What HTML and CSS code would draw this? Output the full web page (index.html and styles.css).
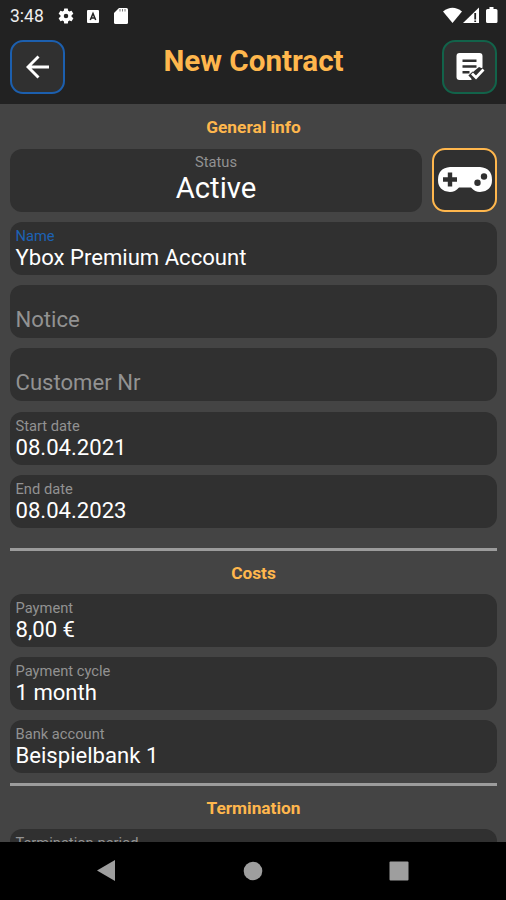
FILE: index.html
```html
<!DOCTYPE html>
<html lang="en">
<head>
<meta charset="utf-8">
<title>New Contract</title>
<link rel="stylesheet" href="styles.css">
</head>
<body>
<div class="phone">
  <header class="top">
    <div class="statusbar">
      <span class="clock">3:48</span>
      <svg class="gear" width="18" height="18" viewBox="0 0 24 24"><path fill="#fff" fill-rule="evenodd" d="M19.4 13a7.500 7.500 0 0 0 0-2l2.100-1.650a.5.5 0 0 0 .12-.64l-2-3.460a.5.5 0 0 0-.6-.22l-2.500 1a7.300 7.300 0 0 0-1.700-.98l-.38-2.650A.5.5 0 0 0 14 2h-4a.5.5 0 0 0-.5.420l-.38 2.650c-.6.250-1.170.590-1.690.980l-2.490-1a.5.5 0 0 0-.61.220l-2 3.460a.5.5 0 0 0 .12.640L4.600 11a8 8 0 0 0 0 2l-2.150 1.650a.5.5 0 0 0-.12.640l2 3.460c.13.220.39.300.61.220l2.490-1c.52.400 1.080.730 1.690.980l.38 2.650c.03.240.240.400.5.400h4c.25 0 .46-.160.5-.400l.38-2.650a7.300 7.300 0 0 0 1.690-.980l2.490 1c.23.090.49 0 .61-.220l2-3.460a.5.5 0 0 0-.12-.640zM12 15a3 3 0 1 1 0-6 3 3 0 0 1 0 6z"/></svg>
      <svg class="abox" width="12" height="13" viewBox="0 0 12 13"><rect width="12" height="13" rx="1" fill="#fff"/><path d="M3.300 10 6 3.500 8.700 10M4.300 8h3.400" fill="none" stroke="#222" stroke-width="1.500"/></svg>
      <svg class="sd" width="14" height="16" viewBox="0 0 14 16"><path fill="#fff" d="M5 0h7.500Q14 0 14 1.500v13q0 1.500-1.500 1.500h-11Q0 16 0 14.500V5z"/><path d="M6 1v2.500M8.500 1v2.500M11 1v2.500" stroke="#777" stroke-width="1"/></svg>
      <svg class="signals" width="56" height="18" viewBox="0 0 56 18"><path fill="#fff" d="M0 4.500Q9.500-3 19 4.500L9.500 16z"/><path fill="#fff" d="M20 16 36 .5V16z"/><path d="M32.200 6v6.500M32.200 13.500v1.500" stroke="#222" stroke-width="1.800"/><path fill="#fff" d="M46.500 0h4v2H53q1.500 0 1.500 1.500v11Q54.500 16 53 16h-8.500Q43 16 43 14.500v-11Q43 2 44.500 2h2z"/></svg>
    </div>
    <div class="toolbar">
      <button class="tool back" aria-label="Back"><svg width="24" height="24" viewBox="0 0 24 24"><path d="M23 12H2M12.500 1.500 2 12l10.500 10.500" fill="none" stroke="#fff" stroke-width="2.900"/></svg></button>
      <h1>New Contract</h1>
      <button class="tool save" aria-label="Save"><svg width="30" height="28" viewBox="0 0 30 28"><path fill="#fff" d="M4.500 0h20Q27.500 0 27.500 3v12.500l-3.500-1.500-6 5-1.500 3V27h-12Q1.500 27 1.500 24V3Q1.500 0 4.500 0z"/><path d="M7.500 7.700h14M7.500 13.500h14M7.500 19.300h7" stroke="#303030" stroke-width="2.500"/><path d="m15.500 20.500 5 5 9-9" fill="none" stroke="#303030" stroke-width="6"/><path d="m17 20.500 4 4 7.500-8" fill="none" stroke="#fff" stroke-width="2.700"/></svg></button>
    </div>
  </header>
  <main class="content">
    <h2 class="first">General info</h2>
    <div class="status-row">
      <div class="status"><span class="label">Status</span><span class="state">Active</span></div>
      <div class="category"><svg width="56" height="28" viewBox="0 0 56 28"><path fill="#fff" d="M13 1h30q12 1 12 13 0 11-12 12-5 0-9-4.500H22Q18 26 13 26 1 25 1 14 1 2 13 1z"/><path d="M13 6.500v14M6 13.500h14" stroke="#303030" stroke-width="4.400"/><circle cx="40.500" cy="16.800" r="3.200" fill="#303030"/><circle cx="47" cy="10.500" r="3.200" fill="#303030"/></svg></div>
    </div>
    <div class="fields">
      <div class="field focus"><span class="label">Name</span><span class="value">Ybox Premium Account</span></div>
      <div class="field empty"><span class="value">Notice</span></div>
      <div class="field empty"><span class="value">Customer Nr</span></div>
      <div class="field"><span class="label">Start date</span><span class="value">08.04.2021</span></div>
      <div class="field"><span class="label">End date</span><span class="value">08.04.2023</span></div>
    </div>
    <hr class="after-info">
    <h2>Costs</h2>
    <div class="fields">
      <div class="field"><span class="label">Payment</span><span class="value">8,00 €</span></div>
      <div class="field"><span class="label">Payment cycle</span><span class="value">1 month</span></div>
      <div class="field"><span class="label">Bank account</span><span class="value">Beispielbank 1</span></div>
    </div>
    <hr class="after-costs">
    <h2>Termination</h2>
    <div class="fields">
      <div class="field"><span class="label">Termination period</span></div>
    </div>
  </main>
  <nav class="navbar">
    <svg width="18" height="22" viewBox="0 0 18 22"><path fill="#9e9e9e" d="M18 0v21L0 10.500z"/></svg>
    <svg width="20" height="20" viewBox="0 0 20 20"><circle cx="10" cy="10" r="9.300" fill="#9e9e9e"/></svg>
    <svg width="20" height="20" viewBox="0 0 20 20"><rect x=".5" y=".5" width="19" height="19" rx="1" fill="#9e9e9e"/></svg>
  </nav>
</div>
</body>
</html>
```
FILE: styles.css
```css
* { box-sizing: border-box; }
body { margin: 0; background: #444; font-family: Roboto, sans-serif; color: #fff; }
svg { display: block; flex: none; }
.phone { width: 506px; height: 900px; display: flex; flex-direction: column; overflow: hidden; }
.top { flex: none; height: 104px; background: #222; }
.statusbar { height: 32px; display: flex; align-items: center; padding: 0 8px 0 10px; }
.clock { width: 47px; font-size: 17.500px; color: #eee; }
.abox { margin-left: 12px; }
.sd { margin-left: 15px; }
.signals { margin-left: auto; margin-right: -1px; }
.toolbar { display: flex; justify-content: space-between; padding: 8px 9px 0 10px; }
.tool { width: 55px; height: 54px; padding: 0; border: 2px solid #1c5fae; border-radius: 13px; background: #303030; display: flex; align-items: center; justify-content: center; }
.save { border-color: #12634a; }
h1 { margin: 1px 0 0; font-size: 29.600px; line-height: 40px; font-weight: 700; color: #ffb74d; }
.content { flex: 1; min-height: 0; overflow: hidden; padding: 0 9px 0 10px; }
h2 { margin: 0; height: 43px; font-size: 17.300px; line-height: 45px; font-weight: 700; text-align: center; color: #ffb74d; }
.first { height: 44.500px; line-height: 46px; }
.status-row { display: flex; gap: 10px; height: 63px; margin-bottom: 10.500px; }
.status { flex: 1; display: flex; flex-direction: column; align-items: center; background: #303030; border-radius: 12px; padding-top: 4px; }
.state { font-size: 29.300px; line-height: 35px; }
.category { width: 65px; height: 64px; margin-top: -1px; border: 2px solid #ffb74d; border-radius: 13px; background: #303030; display: flex; align-items: center; justify-content: center; }
.fields { display: flex; flex-direction: column; gap: 10.200px; }
.field { height: 53px; padding: 5px 5px 0 5.500px; background: #303030; border-radius: 12px; display: flex; flex-direction: column; flex: none; }
.label { font-size: 14.700px; line-height: 18px; color: #929292; }
.value { font-size: 22.100px; line-height: 24px; }
.focus .label { color: #1c62b5; }
.empty { padding-top: 22px; }
.empty .value { color: #929292; }
hr { height: 3px; margin: 0; border: 0; background: #9c9c9c; }
.after-info { margin-top: 20px; }
.after-costs { margin-top: 10px; }
.navbar { flex: none; height: 58px; background: #000; display: flex; align-items: center; justify-content: space-between; padding: 0 97px 0 97px; }
.navbar svg:nth-child(2) { margin-left: 2px; }
```
